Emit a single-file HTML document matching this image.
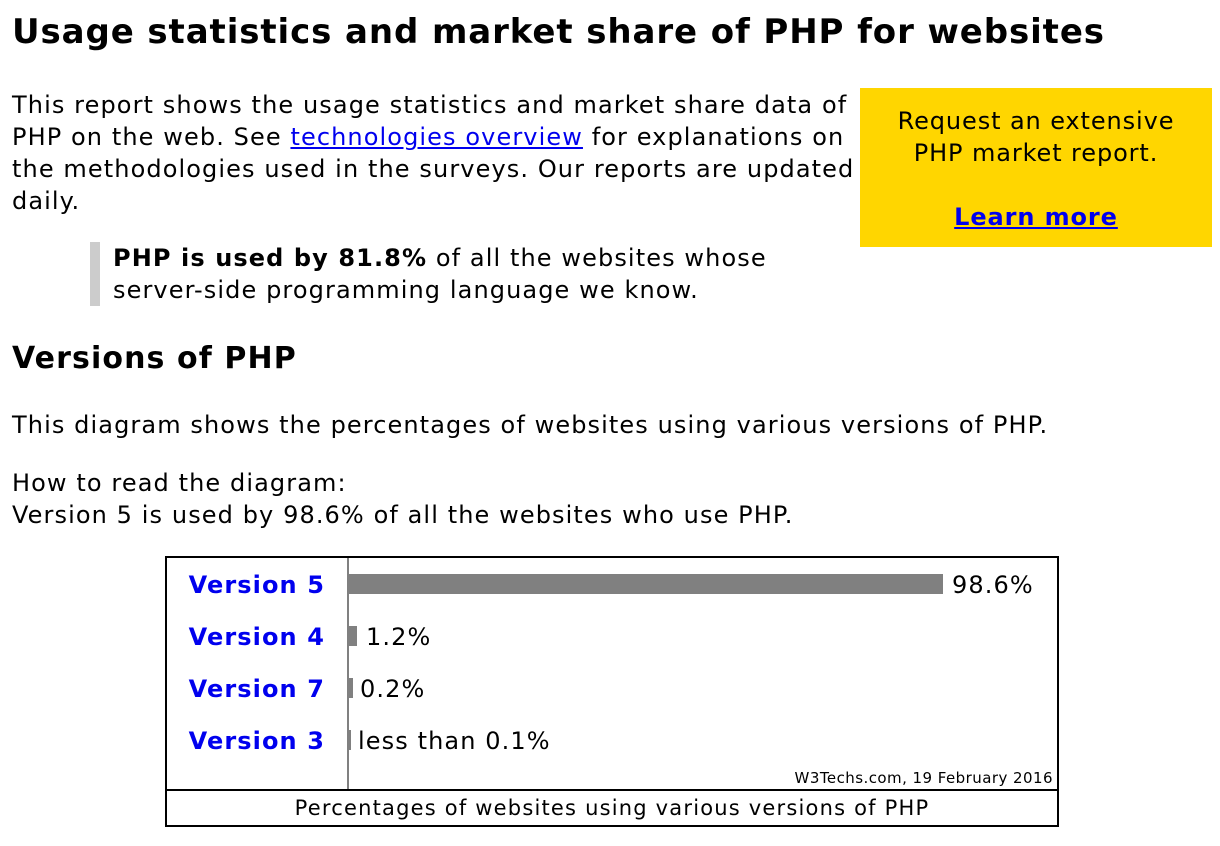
<!DOCTYPE html>
<html><head><meta charset="utf-8"><style>
body{margin:0;background:#fff;font-family:"DejaVu Sans",Verdana,sans-serif;color:#000;width:1220px;height:846px;overflow:hidden;position:relative}
.a{position:absolute;white-space:nowrap}
h1{position:absolute;left:12px;top:9px;margin:0;font-size:34px;letter-spacing:0.9px;font-weight:bold;line-height:46px;white-space:nowrap}
.p{font-size:24px;letter-spacing:1.1px;line-height:32px}
a{color:#0000ee}
.box{position:absolute;left:860px;top:88px;width:352px;height:159px;background:#ffd600;text-align:center;font-size:24px;letter-spacing:0.9px;line-height:32px;padding-top:17px;box-sizing:border-box}
.bq{position:absolute;left:90px;top:242px;height:64px;border-left:10px solid #ccc;padding-left:13px;font-size:24px;letter-spacing:1.1px;line-height:32px;white-space:nowrap}
h2{position:absolute;left:12px;top:339px;margin:0;font-size:30px;letter-spacing:1.1px;line-height:40px}
.chart{position:absolute;left:165px;top:556px;width:894px;height:271px;border:2px solid #000;box-sizing:border-box}
.vl{position:absolute;left:180px;top:0;width:2px;height:233px;background:#808080}
.hl{position:absolute;left:0;top:231px;width:100%;height:2px;background:#000}
.lab{position:absolute;right:732px;font-weight:bold;color:#0000ee;font-size:24px;letter-spacing:1.1px;line-height:30px;white-space:nowrap}
.bar{position:absolute;left:182px;height:20px;background:#808080}
.val{position:absolute;font-size:24px;letter-spacing:1.1px;line-height:30px;white-space:nowrap}
</style></head><body>
<h1>Usage statistics and market share of PHP for websites</h1>
<div class="a p" style="left:12px;top:89px">This report shows the usage statistics and market share data of<br>PHP on the web. See <a href="#">technologies overview</a> for explanations on<br>the methodologies used in the surveys. Our reports are updated<br>daily.</div>
<div class="box">Request an extensive<br>PHP market report.<br><br><a href="#" style="font-weight:bold">Learn more</a></div>
<div class="bq"><b>PHP is used by 81.8%</b> of all the websites whose<br>server-side programming language we know.</div>
<h2>Versions of PHP</h2>
<div class="a p" style="left:12px;top:409px">This diagram shows the percentages of websites using various versions of PHP.</div>
<div class="a p" style="left:12px;top:467px">How to read the diagram:<br>Version 5 is used by 98.6% of all the websites who use PHP.</div>
<div class="chart">
<div class="vl"></div><div class="hl"></div>
<div class="lab" style="top:12px">Version 5</div>
<div class="lab" style="top:64px">Version 4</div>
<div class="lab" style="top:116px">Version 7</div>
<div class="lab" style="top:168px">Version 3</div>
<div class="bar" style="top:16px;width:594px"></div><div class="val" style="left:785px;top:12px">98.6%</div>
<div class="bar" style="top:68px;width:8px"></div><div class="val" style="left:199px;top:64px">1.2%</div>
<div class="bar" style="top:120px;width:4px"></div><div class="val" style="left:193px;top:116px">0.2%</div>
<div class="bar" style="top:172px;width:2px"></div><div class="val" style="left:191px;top:168px">less than 0.1%</div>
<div class="a" style="right:4px;top:211px;font-size:15px;letter-spacing:0.45px;line-height:18px">W3Techs.com, 19 February 2016</div>
<div class="a" style="left:0;width:100%;text-align:center;top:237px;font-size:21px;letter-spacing:1.2px;line-height:26px">Percentages of websites using various versions of PHP</div>
</div>
</body></html>
